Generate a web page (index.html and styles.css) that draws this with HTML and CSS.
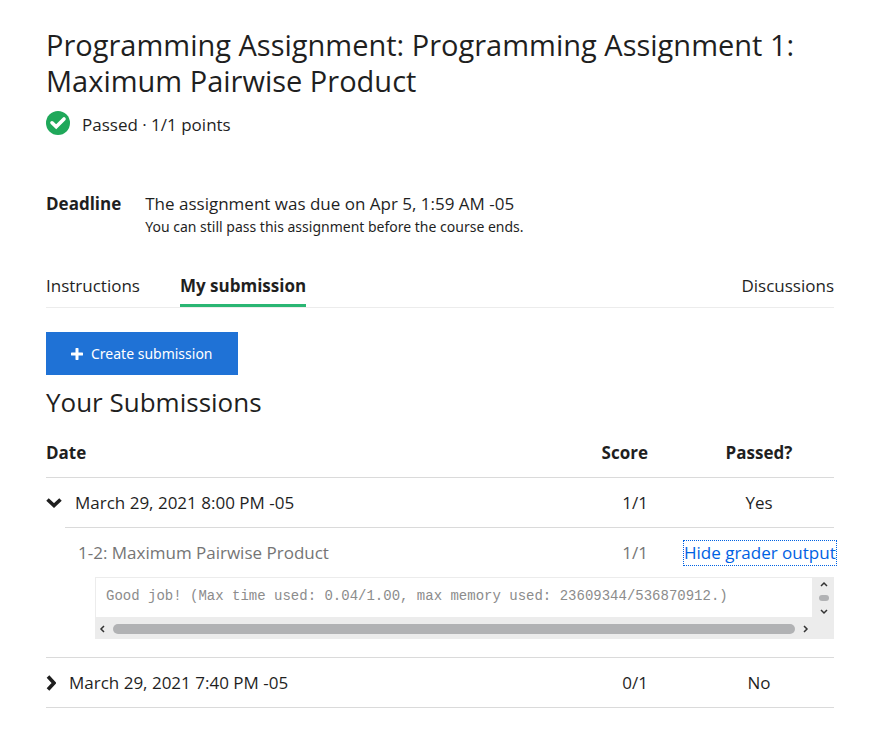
FILE: index.html
```html
<!DOCTYPE html>
<html lang="en">
<head>
<meta charset="utf-8">
<title>Programming Assignment 1</title>
<link rel="stylesheet" href="styles.css">
</head>
<body>
<main class="page">
  <h1 class="title">Programming Assignment: Programming Assignment 1: Maximum Pairwise Product</h1>
  <div class="status">
    <svg class="status-icon" viewBox="0 0 24 24" aria-hidden="true"><circle cx="12" cy="12" r="12" fill="#1fa85a"/><path d="M6 11.8l4.2 4L18 8" fill="none" stroke="#fff" stroke-width="3.6" stroke-linecap="round"/></svg>
    <span class="status-text">Passed · 1/1 points</span>
  </div>
  <section class="deadline">
    <strong>Deadline</strong>
    <div>
      <p class="due">The assignment was due on Apr 5, 1:59 AM -05</p>
      <p class="note">You can still pass this assignment before the course ends.</p>
    </div>
  </section>
  <nav class="tabs">
    <a class="tab" href="#instructions">Instructions</a>
    <a class="tab tab-active" href="#submission" aria-current="page">My submission</a>
    <a class="tab tab-end" href="#discussions">Discussions</a>
  </nav>
  <button class="create" type="button">
    <svg class="plus" viewBox="0 0 12 12" aria-hidden="true"><path d="M6 1v10M1 6h10" stroke="#fff" stroke-width="3" stroke-linecap="round"/></svg>
    Create submission
  </button>
  <h2 class="subtitle">Your Submissions</h2>
  <table class="submissions">
    <colgroup><col class="col-indent"><col><col class="col-score"><col class="col-passed"></colgroup>
    <thead>
      <tr><th colspan="2" scope="col">Date</th><th class="score" scope="col">Score</th><th class="mid" scope="col">Passed?</th></tr>
    </thead>
    <tbody>
      <tr class="ruled">
        <td colspan="2"><button class="toggle toggle-open" type="button" aria-expanded="true"><svg class="chevron-down" viewBox="0 0 16 10" aria-hidden="true"><path d="M1.5 1.5l6.5 6 6.5-6" fill="none" stroke="#1f1f1f" stroke-width="3.6"/></svg>March 29, 2021 8:00 PM -05</button></td>
        <td class="score">1/1</td><td class="mid">Yes</td>
      </tr>
      <tr class="part">
        <td></td><td class="part-name">1-2: Maximum Pairwise Product</td>
        <td class="score">1/1</td><td class="link-cell"><button class="grader" type="button">Hide grader output</button></td>
      </tr>
      <tr class="output-row">
        <td></td>
        <td colspan="3">
          <div class="output">
            <pre>Good job! (Max time used: 0.04/1.00, max memory used: 23609344/536870912.)</pre>
            <div class="vbar"><svg viewBox="0 0 8 6"><path d="M1 5l3-3 3 3"/></svg><i class="vthumb"></i><svg viewBox="0 0 8 6"><path d="M1 1l3 3 3-3"/></svg></div>
            <div class="hbar"><svg viewBox="0 0 6 8"><path d="M5 1L2 4l3 3"/></svg><i class="hthumb"></i><svg viewBox="0 0 6 8"><path d="M1 1l3 3-3 3"/></svg></div>
          </div>
        </td>
      </tr>
      <tr class="ruled last">
        <td colspan="2"><button class="toggle" type="button" aria-expanded="false"><svg class="chevron-right" viewBox="0 0 10 16" aria-hidden="true"><path d="M2 1.5L8 8l-6 6.5" fill="none" stroke="#1f1f1f" stroke-width="3.6"/></svg>March 29, 2021 7:40 PM -05</button></td>
        <td class="score">0/1</td><td class="mid">No</td>
      </tr>
    </tbody>
  </table>
</main>
</body>
</html>
```
FILE: styles.css
```css
* { box-sizing: border-box; }
body { margin: 0; background: #fff; color: #1f1f1f; font: 17px/24px "Open Sans", sans-serif; }
button { padding: 0; border: 0; background: none; color: inherit; font: inherit; cursor: pointer; }
p { margin: 0; }
svg { display: block; flex: none; }
.page { padding: 27px 54px 36px 46px; }
.title { margin: 0; font-size: 29px; line-height: 36px; font-weight: 400; }
.status { display: flex; align-items: flex-start; gap: 12px; margin-top: 12px; }
.status-text { padding-top: 2px; }
.status-icon { width: 24px; height: 24px; }
.deadline { display: flex; gap: 24px; margin-top: 55px; }
.note { font: 14px/22px "Noto Sans", sans-serif; }
.tabs { display: flex; gap: 40px; margin-top: 36px; border-bottom: 1px solid #ececec; }
.tab { padding-bottom: 6px; border-bottom: 3px solid transparent; color: inherit; text-decoration: none; }
.tab-active { border-color: #2ab673; font-weight: 700; }
.tab-end { margin-left: auto; }
.create { display: flex; align-items: center; gap: 8px; height: 43px; margin-top: 24px; padding: 0 25px; background: #1f72d6; color: #fff; font: 14px/22px "Noto Sans", sans-serif; }
.plus { width: 12px; height: 12px; }
.subtitle { margin: 9px 0 0; font-size: 26px; line-height: 36px; font-weight: 400; }
.submissions { width: 100%; margin-top: 7px; border-collapse: collapse; table-layout: fixed; }
.col-indent { width: 19px; }
.col-score { width: 120px; }
.col-passed { width: 150px; }
th, td { height: 50px; padding: 2px 0 0; text-align: left; }
.mid { text-align: center; }
.score { padding-right: 36px; text-align: right; }
.ruled td { border-top: 1px solid #dadada; }
.last td { border-bottom: 1px solid #dadada; padding-top: 0; }
.toggle { display: flex; align-items: center; gap: 13px; }
.chevron-down { width: 16px; height: 10px; }
.chevron-right { width: 10px; height: 16px; }
.part { color: #757575; }
.part td + td { border-top: 1px solid #dadada; }
.part-name { padding-left: 13px; }
.grader { color: #0062e3; white-space: nowrap; outline: 1px dotted #0062e3; }
.output-row td { height: 80px; padding: 0 0 18px; vertical-align: top; }
.output { display: grid; grid-template: 41px 21px / 1fr 21px; margin-left: 30px; background: #ececec; }
.output pre { margin: 0; padding: 9px 10px; overflow: hidden; border: 1px solid #ececec; background: #fff; color: #8c8c8c; font: 14px/18px "Liberation Mono", monospace; }
.vbar, .hbar { display: flex; align-items: center; gap: 8px; }
.vbar { flex-direction: column; justify-content: center; }
.vbar svg { width: 8px; height: 6px; }
.hbar { padding: 0 4px; }
.hbar svg { width: 6px; height: 8px; }
.output path { fill: none; stroke: #333; stroke-width: 1.5; }
.hthumb { flex: 1; height: 10px; border-radius: 5px; background: #b1b2b4; }
.vthumb { width: 10px; height: 6px; border-radius: 3px; background: #b1b2b4; }
```
